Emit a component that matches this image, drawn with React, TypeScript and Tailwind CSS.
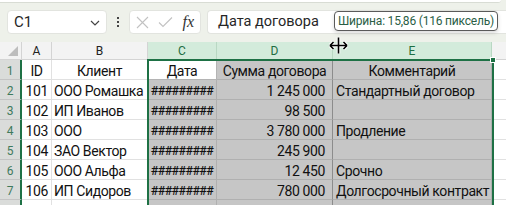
import React from 'react'

const cols = ['A', 'B', 'C', 'D', 'E']

const rows: [string, string, string, string, string][] = [
  ['101', 'ООО Ромашка', '#########', '1 245 000', 'Стандартный договор'],
  ['102', 'ИП Иванов', '#########', '98 500', ''],
  ['103', 'ООО', '#########', '3 780 000', 'Продление'],
  ['104', 'ЗАО Вектор', '#########', '245 900', ''],
  ['105', 'ООО Альфа', '#########', '12 450', 'Срочно'],
  ['106', 'ИП Сидоров', '#########', '780 000', 'Долгосрочный контракт'],
]

const cell = 'h-[20px] flex items-end text-[14px] leading-[16px] tracking-[-0.4px] text-[#111] whitespace-nowrap'

function HeaderCell({ label, selected }: { label: string; selected: boolean }) {
  return (
    <div
      className={
        selected
          ? 'h-[18px] flex items-center justify-center text-[12px] text-[#1e6e42] bg-[#d3ebdb] border-r border-[#b9d8c3]'
          : 'h-[18px] flex items-center justify-center text-[12px] text-[#222] bg-[#f3f3f3] border-r border-b border-[#d4d4d4]'
      }
    >
      {label}
    </div>
  )
}

function RowHead({ n }: { n?: number }) {
  return (
    <div className="h-[20px] flex items-center justify-center pt-[2px] text-[12px] text-[#3f7a5c] bg-[#dadcda] border-b border-[#c4c4c4] border-r-2 border-r-[#1e7145]">
      {n}
    </div>
  )
}

export default function App() {
  return (
    <div className="relative w-[506px] h-[205px] overflow-hidden bg-[#eef1ea] font-['Roboto',sans-serif]">
      {/* ribbon panel edge */}
      <div className="h-[3px] mr-[5px] bg-white border-b border-[#d8dcd4] rounded-br-md" />

      {/* formula bar */}
      <div className="flex items-center h-[24px] mt-[7px] pl-[7px]">
        <div className="w-[100px] h-full flex items-center justify-between pl-[6px] pr-[6px] bg-white border border-[#e2e4df] rounded-[4px]">
          <span className="text-[15px] text-[#262626]">C1</span>
          <svg width="10" height="6" viewBox="0 0 10 6" className="mt-[1px]">
            <path d="M1 1 L5 5 L9 1" fill="none" stroke="#444" strokeWidth="1.2" />
          </svg>
        </div>
        <div className="w-[22px] flex flex-col items-center gap-[2px]">
          <span className="w-[2px] h-[2px] bg-[#444]" />
          <span className="w-[2px] h-[2px] bg-[#444]" />
          <span className="w-[2px] h-[2px] bg-[#444]" />
        </div>
        <div className="w-[72px] h-full flex items-center justify-between px-[6px] bg-white border border-[#e2e4df] rounded-[4px]">
          <svg width="13" height="13" viewBox="0 0 13 13">
            <path d="M1 1 L12 12 M12 1 L1 12" stroke="#c2c2c2" strokeWidth="1.1" />
          </svg>
          <svg width="15" height="12" viewBox="0 0 15 12">
            <path d="M1 6.5 L5 10.5 L14 1.5" fill="none" stroke="#c2c2c2" strokeWidth="1.1" />
          </svg>
          <span className="font-['Liberation_Serif',serif] italic text-[16px] text-[#333] leading-none">fx</span>
        </div>
        <div className="ml-[6px] flex-1 h-full flex items-center pl-[10px] bg-white border border-[#e2e4df] border-r-0 rounded-l-[4px]">
          <span className="text-[14.5px] text-[#262626]">Дата договора</span>
        </div>
      </div>

      {/* grid */}
      <div className="relative mt-[8px]">
        <div className="grid grid-cols-[22px_30px_96px_69px_116px_159px_14px]">
          {/* column headers */}
          <div className="h-[18px] relative bg-[#f3f3f3] border-r border-b border-[#d4d4d4]">
            <svg width="10" height="10" viewBox="0 0 10 10" className="absolute right-[3px] bottom-[3px]">
              <path d="M10 0 L10 10 L0 10 Z" fill="#bdbdbd" />
            </svg>
          </div>
          {cols.map((c) => (
            <HeaderCell key={c} label={c} selected={c === 'C' || c === 'D' || c === 'E'} />
          ))}
          <div className="h-[18px] bg-[#f3f3f3] border-b border-[#d4d4d4]" />

          {/* row 1 */}
          <RowHead n={1} />
          <div className={`${cell} justify-center bg-white border-r border-b border-[#e1e1e1]`}>ID</div>
          <div className={`${cell} justify-center bg-white border-r border-b border-[#e1e1e1]`}>Клиент</div>
          <div className={`${cell} justify-center bg-white border-r border-b border-[#b4b4b4]`}>Дата</div>
          <div className={`${cell} justify-center bg-[#c6c6c6] border-r border-r-[#8c8c8c] border-b border-b-[#b0b0b0]`}>Сумма договора</div>
          <div className={`${cell} justify-center bg-[#c6c6c6] border-r border-b border-[#b0b0b0]`}>Комментарий</div>
          <div className="h-[20px] bg-white border-b border-[#e1e1e1]" />

          {rows.map((r, i) => (
            <React.Fragment key={r[0]}>
              <RowHead n={i + 2} />
              <div className={`${cell} justify-end pr-[3px] bg-white border-r border-b border-[#e1e1e1]`}>{r[0]}</div>
              <div className={`${cell} pl-[2px] bg-white border-r border-b border-[#e1e1e1]`}>{r[1]}</div>
              <div className={`${cell} justify-center bg-[#c6c6c6] border-r border-b border-[#b0b0b0] overflow-hidden`}>
                <span className="text-[12.5px] tracking-[-0.6px] font-medium">{r[2]}</span>
              </div>
              <div className={`${cell} justify-end pr-[7px] bg-[#c6c6c6] border-r border-r-[#8c8c8c] border-b border-b-[#b0b0b0]`}>{r[3]}</div>
              <div className={`${cell} pl-[3px] bg-[#c6c6c6] border-r border-b border-[#b0b0b0]`}>{r[4]}</div>
              <div className="h-[20px] bg-white border-b border-[#e1e1e1]" />
            </React.Fragment>
          ))}

          {/* row 8 (cut off) */}
          <RowHead />
          <div className="h-[20px] bg-white border-r border-[#e1e1e1]" />
          <div className="h-[20px] bg-white border-r border-[#e1e1e1]" />
          <div className="h-[20px] bg-[#c6c6c6] border-r border-[#b0b0b0]" />
          <div className="h-[20px] bg-[#c6c6c6] border-r border-[#8c8c8c]" />
          <div className="h-[20px] bg-[#c6c6c6] border-r border-[#b0b0b0]" />
          <div className="h-[20px] bg-white" />
        </div>

        {/* selection outline C:E */}
        <div className="absolute left-[147px] top-[17px] w-[347px] h-[200px] border-2 border-b-0 border-[#1e7145] pointer-events-none" />
        <div className="absolute left-[490px] top-[15px] w-[6px] h-[6px] bg-[#1e7145] border border-white pointer-events-none" />
      </div>

      {/* column width tooltip */}
      <div className="absolute left-[334px] top-[11px] h-[20px] px-[3px] flex items-center bg-white border border-[#5a5a5a] rounded-[4px] shadow-[0_2px_4px_rgba(0,0,0,0.15)] text-[12px] tracking-[-0.2px] text-[#2a5e45] whitespace-nowrap">
        Ширина: 15,86 (116 пиксель)
      </div>

      {/* resize cursor */}
      <svg width="19" height="17" viewBox="0 0 19 17" className="absolute left-[329px] top-[37px]">
        <path
          d="M9.5 0.5 V16.5 M1 8.5 H18 M1 8.5 L4.5 5 M1 8.5 L4.5 12 M18 8.5 L14.5 5 M18 8.5 L14.5 12"
          fill="none"
          stroke="#fff"
          strokeWidth="3.5"
        />
        <path
          d="M9.5 0.5 V16.5 M1 8.5 H18 M1 8.5 L4.5 5 M1 8.5 L4.5 12 M18 8.5 L14.5 5 M18 8.5 L14.5 12"
          fill="none"
          stroke="#000"
          strokeWidth="1.6"
        />
      </svg>
    </div>
  )
}
